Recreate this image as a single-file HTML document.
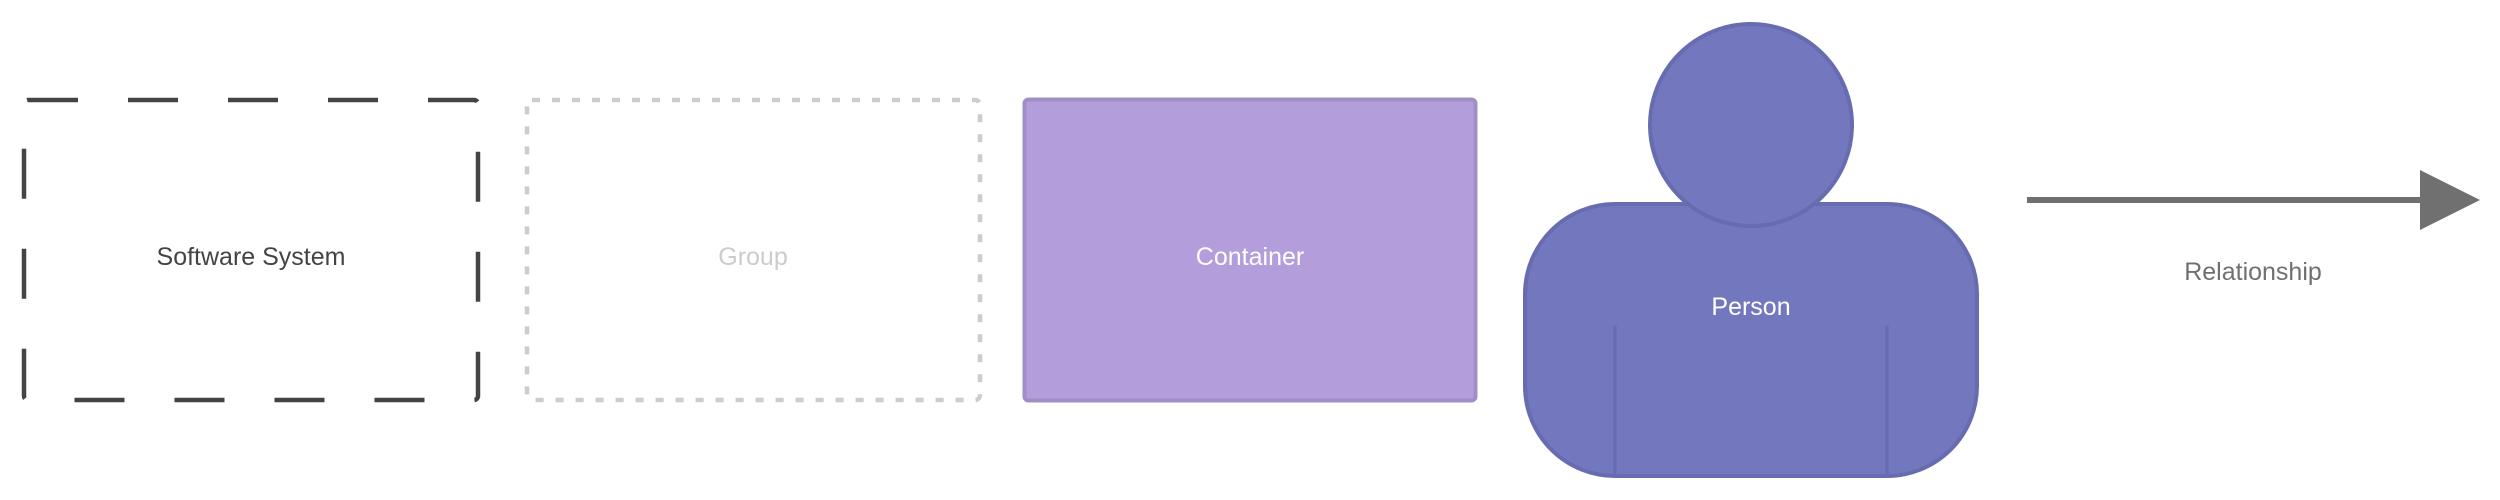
<!DOCTYPE html>
<html><head><meta charset="utf-8"><style>
html,body{margin:0;padding:0;background:#fff;}
svg{display:block;}
text{font-family:"Liberation Sans",sans-serif;font-size:25px;text-anchor:middle;}
</style></head><body>
<svg width="2500" height="500" viewBox="0 0 2500 500">
<path d="M28,100 H474 A4,4 0 0 1 478,104 V396 A4,4 0 0 1 474,400 H28 A4,4 0 0 1 24,396 V104 A4,4 0 0 1 28,100 Z" fill="none" stroke="#444" stroke-width="4.5" stroke-dasharray="50 50"/>
<text x="251" y="265" fill="#444">Software System</text>
<rect x="527" y="100" width="453" height="300" rx="5" fill="none" stroke="#ccc" stroke-width="4.5" stroke-dasharray="8 12"/>
<text x="753" y="265" fill="#ccc">Group</text>
<rect x="1024.5" y="99.5" width="451" height="301" rx="4" fill="#b39ddb" stroke="#a08fc6" stroke-width="4"/>
<text x="1250" y="265" fill="#fff">Container</text>
<rect x="1525" y="204" width="452" height="272" rx="90" ry="90" fill="#7378be" stroke="#676bb0" stroke-width="4"/>
<circle cx="1751" cy="125" r="101" fill="#7378be" stroke="#676bb0" stroke-width="4"/>
<line x1="1615" y1="325" x2="1615" y2="476" stroke="#676bb0" stroke-width="3"/>
<line x1="1887" y1="325" x2="1887" y2="476" stroke="#676bb0" stroke-width="3"/>
<text x="1751" y="315" fill="#fff">Person</text>
<line x1="2027" y1="200" x2="2425" y2="200" stroke="#707070" stroke-width="6"/>
<polygon points="2420,170 2480,200 2420,230" fill="#707070"/>
<text x="2253" y="280" fill="#707070">Relationship</text>
</svg>
</body></html>
